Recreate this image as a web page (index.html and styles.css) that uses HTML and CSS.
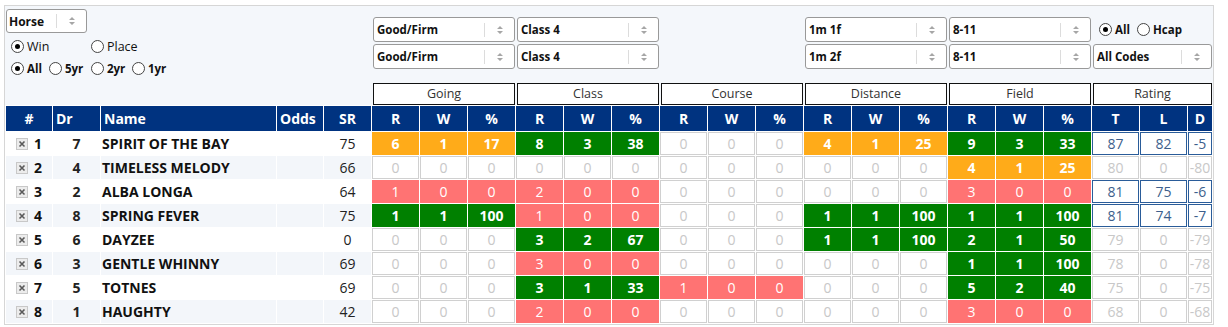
FILE: index.html
```html
<!DOCTYPE html>
<html lang="en">
<head>
<meta charset="utf-8">
<title>Race form</title>
<link rel="stylesheet" href="styles.css">
</head>
<body>
<div class="panel">
  <div class="controls">
    <div class="left">
      <div class="sel sel-horse"><span class="sel-text">Horse</span><span class="sel-sep"></span><span class="sel-arrow"><svg width="6" height="10" viewBox="0 0 6 10"><path d="M0 4L3 1L6 4Z M0 6L3 9L6 6Z" fill="#a6a6a6"/></svg></span></div>
      <div class="radio-row">
        <span class="radio w-win"><i class="dot on"></i>Win</span>
        <span class="radio"><i class="dot"></i>Place</span>
      </div>
      <div class="radio-row bold">
        <span class="radio w-all"><i class="dot on"></i>All</span>
        <span class="radio w-5yr"><i class="dot"></i>5yr</span>
        <span class="radio w-2yr"><i class="dot"></i>2yr</span>
        <span class="radio"><i class="dot"></i>1yr</span>
      </div>
    </div>

    <div class="sel g-going row1"><span class="sel-text">Good/Firm</span><span class="sel-sep"></span><span class="sel-arrow"><svg width="6" height="10" viewBox="0 0 6 10"><path d="M0 4L3 1L6 4Z M0 6L3 9L6 6Z" fill="#a6a6a6"/></svg></span></div>
    <div class="sel g-class row1"><span class="sel-text">Class 4</span><span class="sel-sep"></span><span class="sel-arrow"><svg width="6" height="10" viewBox="0 0 6 10"><path d="M0 4L3 1L6 4Z M0 6L3 9L6 6Z" fill="#a6a6a6"/></svg></span></div>
    <div class="sel g-dist row1"><span class="sel-text">1m 1f</span><span class="sel-sep"></span><span class="sel-arrow"><svg width="6" height="10" viewBox="0 0 6 10"><path d="M0 4L3 1L6 4Z M0 6L3 9L6 6Z" fill="#a6a6a6"/></svg></span></div>
    <div class="sel g-field row1"><span class="sel-text">8-11</span><span class="sel-sep"></span><span class="sel-arrow"><svg width="6" height="10" viewBox="0 0 6 10"><path d="M0 4L3 1L6 4Z M0 6L3 9L6 6Z" fill="#a6a6a6"/></svg></span></div>
    <div class="radio-row bold g-rating row1 top-radios">
      <span class="radio w-all"><i class="dot on"></i>All</span>
      <span class="radio"><i class="dot"></i>Hcap</span>
    </div>

    <div class="sel g-going row2"><span class="sel-text">Good/Firm</span><span class="sel-sep"></span><span class="sel-arrow"><svg width="6" height="10" viewBox="0 0 6 10"><path d="M0 4L3 1L6 4Z M0 6L3 9L6 6Z" fill="#a6a6a6"/></svg></span></div>
    <div class="sel g-class row2"><span class="sel-text">Class 4</span><span class="sel-sep"></span><span class="sel-arrow"><svg width="6" height="10" viewBox="0 0 6 10"><path d="M0 4L3 1L6 4Z M0 6L3 9L6 6Z" fill="#a6a6a6"/></svg></span></div>
    <div class="sel g-dist row2"><span class="sel-text">1m 2f</span><span class="sel-sep"></span><span class="sel-arrow"><svg width="6" height="10" viewBox="0 0 6 10"><path d="M0 4L3 1L6 4Z M0 6L3 9L6 6Z" fill="#a6a6a6"/></svg></span></div>
    <div class="sel g-field row2"><span class="sel-text">8-11</span><span class="sel-sep"></span><span class="sel-arrow"><svg width="6" height="10" viewBox="0 0 6 10"><path d="M0 4L3 1L6 4Z M0 6L3 9L6 6Z" fill="#a6a6a6"/></svg></span></div>
    <div class="sel g-rating row2"><span class="sel-text">All Codes</span><span class="sel-sep"></span><span class="sel-arrow"><svg width="6" height="10" viewBox="0 0 6 10"><path d="M0 4L3 1L6 4Z M0 6L3 9L6 6Z" fill="#a6a6a6"/></svg></span></div>

    <div class="group g-going">Going</div>
    <div class="group g-class">Class</div>
    <div class="group g-course">Course</div>
    <div class="group g-dist">Distance</div>
    <div class="group g-field">Field</div>
    <div class="group g-rating">Rating</div>
  </div>

  <table class="data">
    <colgroup>
      <col class="c-num"><col class="c-dr"><col class="c-name"><col class="c-odds"><col class="c-sr">
      <col class="c-stat" span="17"><col class="c-d">
    </colgroup>
    <thead>
      <tr>
        <th>#</th><th class="l">Dr</th><th class="l">Name</th><th class="l">Odds</th><th>SR</th>
        <th>R</th><th>W</th><th>%</th><th>R</th><th>W</th><th>%</th><th>R</th><th>W</th><th>%</th>
        <th>R</th><th>W</th><th>%</th><th>R</th><th>W</th><th>%</th><th>T</th><th>L</th><th>D</th>
      </tr>
    </thead>
    <tbody>
      <tr>
        <td class="num"><svg class="xbox" width="12" height="12" viewBox="0 0 12 12"><rect x="0.5" y="0.5" width="11" height="11" fill="#ececec" stroke="#c8c8c8"/><path d="M3.5 3.5L8.5 8.5M8.5 3.5L3.5 8.5" stroke="#5a5a5a" stroke-width="1.6"/></svg><b>1</b></td>
        <td class="dr">7</td><td class="nm">SPIRIT OF THE BAY</td><td></td><td class="sr">75</td>
        <td class="s o">6</td><td class="s o">1</td><td class="s o">17</td>
        <td class="s g">8</td><td class="s g">3</td><td class="s g">38</td>
        <td class="s z">0</td><td class="s z">0</td><td class="s z">0</td>
        <td class="s o">4</td><td class="s o">1</td><td class="s o">25</td>
        <td class="s g">9</td><td class="s g">3</td><td class="s g">33</td>
        <td class="s b">87</td><td class="s b">82</td><td class="s b">-5</td>
      </tr>
      <tr>
        <td class="num"><svg class="xbox" width="12" height="12" viewBox="0 0 12 12"><rect x="0.5" y="0.5" width="11" height="11" fill="#ececec" stroke="#c8c8c8"/><path d="M3.5 3.5L8.5 8.5M8.5 3.5L3.5 8.5" stroke="#5a5a5a" stroke-width="1.6"/></svg><b>2</b></td>
        <td class="dr">4</td><td class="nm">TIMELESS MELODY</td><td></td><td class="sr">66</td>
        <td class="s z">0</td><td class="s z">0</td><td class="s z">0</td>
        <td class="s z">0</td><td class="s z">0</td><td class="s z">0</td>
        <td class="s z">0</td><td class="s z">0</td><td class="s z">0</td>
        <td class="s z">0</td><td class="s z">0</td><td class="s z">0</td>
        <td class="s o">4</td><td class="s o">1</td><td class="s o">25</td>
        <td class="s z">80</td><td class="s z">0</td><td class="s z">-80</td>
      </tr>
      <tr>
        <td class="num"><svg class="xbox" width="12" height="12" viewBox="0 0 12 12"><rect x="0.5" y="0.5" width="11" height="11" fill="#ececec" stroke="#c8c8c8"/><path d="M3.5 3.5L8.5 8.5M8.5 3.5L3.5 8.5" stroke="#5a5a5a" stroke-width="1.6"/></svg><b>3</b></td>
        <td class="dr">2</td><td class="nm">ALBA LONGA</td><td></td><td class="sr">64</td>
        <td class="s r">1</td><td class="s r">0</td><td class="s r">0</td>
        <td class="s r">2</td><td class="s r">0</td><td class="s r">0</td>
        <td class="s z">0</td><td class="s z">0</td><td class="s z">0</td>
        <td class="s z">0</td><td class="s z">0</td><td class="s z">0</td>
        <td class="s r">3</td><td class="s r">0</td><td class="s r">0</td>
        <td class="s b">81</td><td class="s b">75</td><td class="s b">-6</td>
      </tr>
      <tr>
        <td class="num"><svg class="xbox" width="12" height="12" viewBox="0 0 12 12"><rect x="0.5" y="0.5" width="11" height="11" fill="#ececec" stroke="#c8c8c8"/><path d="M3.5 3.5L8.5 8.5M8.5 3.5L3.5 8.5" stroke="#5a5a5a" stroke-width="1.6"/></svg><b>4</b></td>
        <td class="dr">8</td><td class="nm">SPRING FEVER</td><td></td><td class="sr">75</td>
        <td class="s g">1</td><td class="s g">1</td><td class="s g">100</td>
        <td class="s r">1</td><td class="s r">0</td><td class="s r">0</td>
        <td class="s z">0</td><td class="s z">0</td><td class="s z">0</td>
        <td class="s g">1</td><td class="s g">1</td><td class="s g">100</td>
        <td class="s g">1</td><td class="s g">1</td><td class="s g">100</td>
        <td class="s b">81</td><td class="s b">74</td><td class="s b">-7</td>
      </tr>
      <tr>
        <td class="num"><svg class="xbox" width="12" height="12" viewBox="0 0 12 12"><rect x="0.5" y="0.5" width="11" height="11" fill="#ececec" stroke="#c8c8c8"/><path d="M3.5 3.5L8.5 8.5M8.5 3.5L3.5 8.5" stroke="#5a5a5a" stroke-width="1.6"/></svg><b>5</b></td>
        <td class="dr">6</td><td class="nm">DAYZEE</td><td></td><td class="sr">0</td>
        <td class="s z">0</td><td class="s z">0</td><td class="s z">0</td>
        <td class="s g">3</td><td class="s g">2</td><td class="s g">67</td>
        <td class="s z">0</td><td class="s z">0</td><td class="s z">0</td>
        <td class="s g">1</td><td class="s g">1</td><td class="s g">100</td>
        <td class="s g">2</td><td class="s g">1</td><td class="s g">50</td>
        <td class="s z">79</td><td class="s z">0</td><td class="s z">-79</td>
      </tr>
      <tr>
        <td class="num"><svg class="xbox" width="12" height="12" viewBox="0 0 12 12"><rect x="0.5" y="0.5" width="11" height="11" fill="#ececec" stroke="#c8c8c8"/><path d="M3.5 3.5L8.5 8.5M8.5 3.5L3.5 8.5" stroke="#5a5a5a" stroke-width="1.6"/></svg><b>6</b></td>
        <td class="dr">3</td><td class="nm">GENTLE WHINNY</td><td></td><td class="sr">69</td>
        <td class="s z">0</td><td class="s z">0</td><td class="s z">0</td>
        <td class="s r">3</td><td class="s r">0</td><td class="s r">0</td>
        <td class="s z">0</td><td class="s z">0</td><td class="s z">0</td>
        <td class="s z">0</td><td class="s z">0</td><td class="s z">0</td>
        <td class="s g">1</td><td class="s g">1</td><td class="s g">100</td>
        <td class="s z">78</td><td class="s z">0</td><td class="s z">-78</td>
      </tr>
      <tr>
        <td class="num"><svg class="xbox" width="12" height="12" viewBox="0 0 12 12"><rect x="0.5" y="0.5" width="11" height="11" fill="#ececec" stroke="#c8c8c8"/><path d="M3.5 3.5L8.5 8.5M8.5 3.5L3.5 8.5" stroke="#5a5a5a" stroke-width="1.6"/></svg><b>7</b></td>
        <td class="dr">5</td><td class="nm">TOTNES</td><td></td><td class="sr">69</td>
        <td class="s z">0</td><td class="s z">0</td><td class="s z">0</td>
        <td class="s g">3</td><td class="s g">1</td><td class="s g">33</td>
        <td class="s r">1</td><td class="s r">0</td><td class="s r">0</td>
        <td class="s z">0</td><td class="s z">0</td><td class="s z">0</td>
        <td class="s g">5</td><td class="s g">2</td><td class="s g">40</td>
        <td class="s z">75</td><td class="s z">0</td><td class="s z">-75</td>
      </tr>
      <tr>
        <td class="num"><svg class="xbox" width="12" height="12" viewBox="0 0 12 12"><rect x="0.5" y="0.5" width="11" height="11" fill="#ececec" stroke="#c8c8c8"/><path d="M3.5 3.5L8.5 8.5M8.5 3.5L3.5 8.5" stroke="#5a5a5a" stroke-width="1.6"/></svg><b>8</b></td>
        <td class="dr">1</td><td class="nm">HAUGHTY</td><td></td><td class="sr">42</td>
        <td class="s z">0</td><td class="s z">0</td><td class="s z">0</td>
        <td class="s r">2</td><td class="s r">0</td><td class="s r">0</td>
        <td class="s z">0</td><td class="s z">0</td><td class="s z">0</td>
        <td class="s z">0</td><td class="s z">0</td><td class="s z">0</td>
        <td class="s r">3</td><td class="s r">0</td><td class="s r">0</td>
        <td class="s z">68</td><td class="s z">0</td><td class="s z">-68</td>
      </tr>
    </tbody>
  </table>
</div>
</body>
</html>
```
FILE: styles.css
```css
* { box-sizing: border-box; }

body {
  margin: 5px 0 0 4px;
  background: #fff;
  font-family: "Open Sans", "Noto Sans", sans-serif;
  color: #222;
}

.panel {
  width: 1210px;
  border: 1px solid #d6d6d6;
  background: #f4f7fb;
}

/* ---------- controls ---------- */
.controls {
  display: grid;
  grid-template-columns: 46px 47px 175px 46px 47px repeat(17, 47px) 24px;
  grid-template-rows: 33px 25px 10px 22px;
  column-gap: 1px;
  row-gap: 2px;
  padding: 3px 1px 0;
}

.left {
  grid-column: 1 / 6;
  grid-row: 1 / 4;
}

.row1 { grid-row: 1; align-self: end; }
.row2 { grid-row: 2; }
.group { grid-row: 4; }

.g-going  { grid-column: 6 / 9; }
.g-class  { grid-column: 9 / 12; }
.g-course { grid-column: 12 / 15; }
.g-dist   { grid-column: 15 / 18; }
.g-field  { grid-column: 18 / 21; }
.g-rating { grid-column: 21 / 24; }

.sel {
  display: flex;
  align-items: center;
  height: 25px;
  margin-left: 1px;
  background: #fff;
  border: 1px solid #999;
  border-radius: 3px;
  font-size: 11.5px;
  font-weight: 700;
  color: #111;
}
.sel-text {
  flex: 1;
  padding-left: 3px;
  white-space: nowrap;
  overflow: hidden;
}
.sel-sep {
  width: 1px;
  height: 14px;
  background: #dcdcdc;
}
.sel-arrow {
  width: 29px;
  display: flex;
  justify-content: center;
  align-items: center;
}
.sel-arrow svg { display: block; }

.sel-horse {
  width: 81px;
  height: 24px;
  margin-left: 0;
  font-size: 12px;
}
.sel-horse .sel-text { padding-left: 2px; }

.radio-row {
  display: flex;
  align-items: center;
  height: 20px;
  padding-left: 5px;
  font-size: 12.5px;
  color: #111;
}
.sel-horse + .radio-row { margin-top: 3px; }
.radio-row + .radio-row { margin-top: 2px; }
.radio-row.bold { font-weight: 700; font-size: 11.5px; }

.radio {
  display: flex;
  align-items: center;
  white-space: nowrap;
}
.w-win { width: 80px; }
.w-all { width: 38px; }
.w-5yr { width: 42px; }
.w-2yr { width: 41px; }

.dot {
  display: inline-flex;
  align-items: center;
  justify-content: center;
  width: 13px;
  height: 13px;
  margin-right: 3px;
  border: 1px solid #444;
  border-radius: 50%;
  background: #fff;
}
.dot.on::after {
  content: "";
  width: 5px;
  height: 5px;
  border-radius: 50%;
  background: #000;
}

.top-radios {
  height: 25px;
  padding-left: 7px;
}

.group {
  margin-left: 1px;
  background: #fff;
  border: 1px solid #111;
  font-size: 12.5px;
  line-height: 20px;
  text-align: center;
  color: #333;
}

/* ---------- data table ---------- */
.data {
  width: 1208px;
  table-layout: fixed;
  border-collapse: separate;
  border-spacing: 1px;
  background: #fff;
  font-size: 14px;
}
.c-num  { width: 46px; }
.c-dr   { width: 47px; }
.c-name { width: 175px; }
.c-odds { width: 46px; }
.c-sr   { width: 47px; }
.c-stat { width: 47px; }
.c-d    { width: 24px; }

.data th,
.data td {
  padding: 0;
  white-space: nowrap;
  vertical-align: middle;
}

.data th {
  height: 25px;
  background: #003380;
  color: #fff;
  font-weight: 700;
  text-align: center;
}
.data th.l {
  text-align: left;
  padding-left: 3px;
}

.data td {
  height: 23px;
  text-align: center;
  color: #222;
}
.data tbody tr:nth-child(even) td:nth-child(-n+5) { background: #f3f6fa; }

.num b { font-weight: 700; color: #111; }
.xbox {
  display: inline-block;
  vertical-align: -1px;
  margin-right: 6px;
}
.dr { font-weight: 700; color: #111; }
.data td.nm {
  text-align: left;
  padding-left: 1px;
  font-weight: 700;
  color: #111;
}
.sr { color: #333; }

.s { border: 1px solid transparent; }
.s.z { border-color: #d0d0d0; color: #c8c8c8; background: #fff; }
.s.o { background: #ffab19; border-color: #ffab19; color: #fff; font-weight: 700; }
.s.g { background: #008000; border-color: #008000; color: #fff; font-weight: 700; }
.s.r { background: #ff7373; border-color: #ff7373; color: #fff; }
.s.b { border-color: #2a5c99; color: #3d5f8c; background: #fff; }
```
